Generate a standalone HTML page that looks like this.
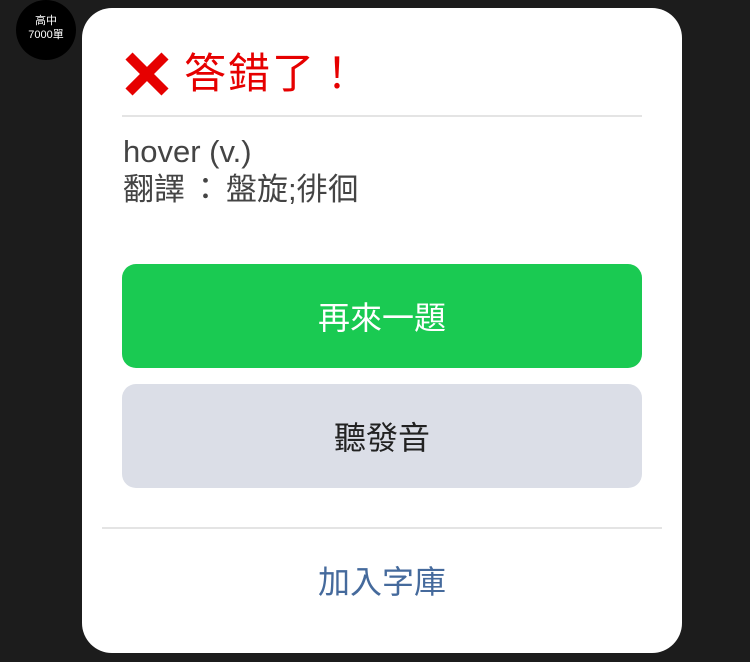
<!DOCTYPE html><html><head><meta charset="utf-8"><style>
body{margin:0;width:750px;height:662px;background:#1c1c1c;position:relative;overflow:hidden;font-family:"Liberation Sans","Noto Sans CJK TC",sans-serif}
.logo{position:absolute;left:16px;top:0;width:60px;height:60px;border-radius:50%;background:#000;color:#fff;font-size:11px;line-height:14px;text-align:center;padding-top:14px;box-sizing:border-box}
.m{position:absolute;left:82px;top:8px;width:600px;height:645px;background:#fff;border-radius:30px}
.t{position:absolute;left:42px;top:38px;color:#e60000;font-size:42px;line-height:56px;display:flex;align-items:center;letter-spacing:2px}
.hr{position:absolute;left:40px;top:107px;width:520px;height:2px;background:#e4e4e4}
.w{position:absolute;left:41px;top:125px;color:#444;font-size:31px;line-height:38px}
.b{position:absolute;left:40px;width:520px;height:104px;border-radius:14px;font-size:32px;display:flex;align-items:center;justify-content:center}
.hr2{position:absolute;left:20px;top:519px;width:560px;height:2px;background:#e4e4e4}
.a{position:absolute;left:0;width:600px;top:552px;text-align:center;color:#456a9c;font-size:32px;line-height:44px}
</style></head><body>
<div class="logo">高中<br>7000單</div>
<div class="m">
<div class="t"><svg width="46" height="46" viewBox="0 0 46 46" style="margin-right:14px"><path d="M5 5L41 41M41 5L5 41" stroke="#e60000" stroke-width="10"/></svg>答錯了！</div>
<div class="hr"></div>
<div class="w">hover (v.)<br>翻譯<span style="margin:0 5px">：</span>盤旋;徘徊</div>
<div class="b" style="top:256px;background:#1aca52;color:#fff">再來一題</div>
<div class="b" style="top:376px;background:#dbdee7;color:#222">聽發音</div>
<div class="hr2"></div>
<div class="a">加入字庫</div>
</div>
</body></html>
